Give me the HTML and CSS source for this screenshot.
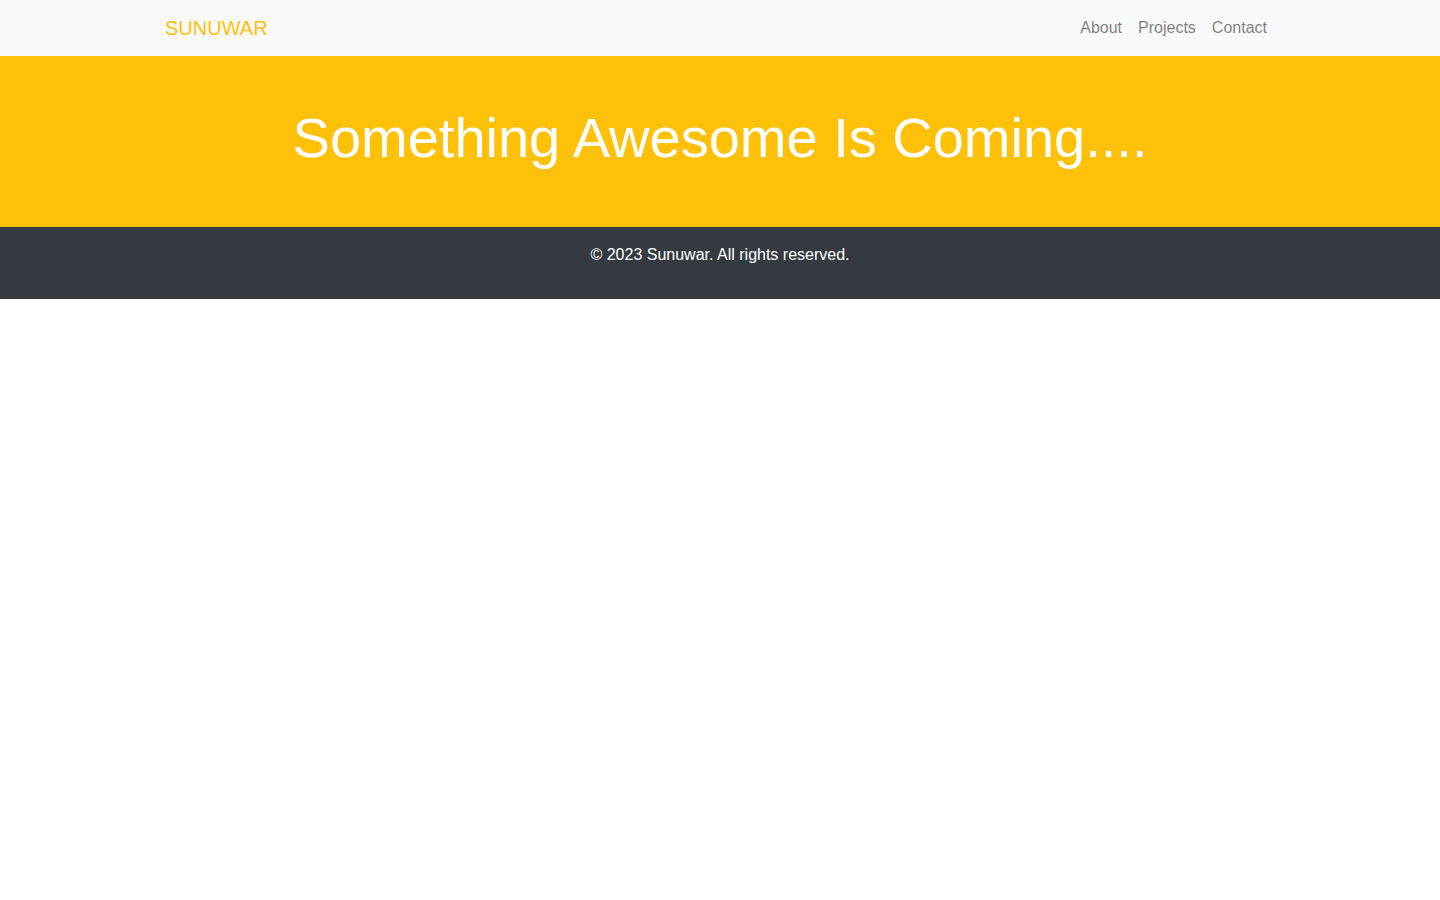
FILE: index.html
```html
<!DOCTYPE html>
<html lang="en">
<head>
<meta charset="utf-8">
<title>Sunuwar</title>
<link rel="stylesheet" href="styles.css">
</head>
<body>
<nav class="navbar">
  <div class="container nav-inner">
    <a class="brand" href="#">SUNUWAR</a>
    <ul class="nav-links">
      <li><a href="#">About</a></li>
      <li><a href="#">Projects</a></li>
      <li><a href="#">Contact</a></li>
    </ul>
  </div>
</nav>
<section class="hero">
  <div class="container">
    <h1 class="hero-title">Something Awesome Is Coming....</h1>
  </div>
</section>
<footer class="footer">
  <div class="container">
    <p class="footer-text">© 2023 Sunuwar. All rights reserved.</p>
  </div>
</footer>
</body>
</html>
```
FILE: styles.css
```css
* { box-sizing: border-box; }
html, body { margin: 0; padding: 0; }
body {
  font-family: "Liberation Sans", Arial, Helvetica, sans-serif;
  font-size: 16px;
  line-height: 1.5;
  color: #212529;
  background: #fff;
}
.container {
  width: 1140px;
  margin: 0 auto;
  padding: 0 15px;
}
.navbar {
  background: #f8f9fa;
  padding: 8px 0;
}
.nav-inner {
  display: flex;
  align-items: center;
  justify-content: space-between;
}
.brand {
  color: #ffc107;
  font-size: 20px;
  line-height: 30px;
  padding: 5px 0;
  text-decoration: none;
}
.nav-links {
  list-style: none;
  margin: 0;
  padding: 0;
  display: flex;
}
.nav-links a {
  display: block;
  padding: 8px;
  color: rgba(0,0,0,.5);
  text-decoration: none;
}
.hero {
  background: #ffc107;
  padding: 48px 0;
  text-align: center;
}
.hero-title {
  margin: 0 0 8px;
  font-size: 56px;
  font-weight: 400;
  line-height: 1.2;
  color: #fff;
}
.footer {
  background: #343a40;
  color: #fff;
  padding: 16px 0;
  text-align: center;
}
.footer-text { margin: 0 0 16px; }
```
